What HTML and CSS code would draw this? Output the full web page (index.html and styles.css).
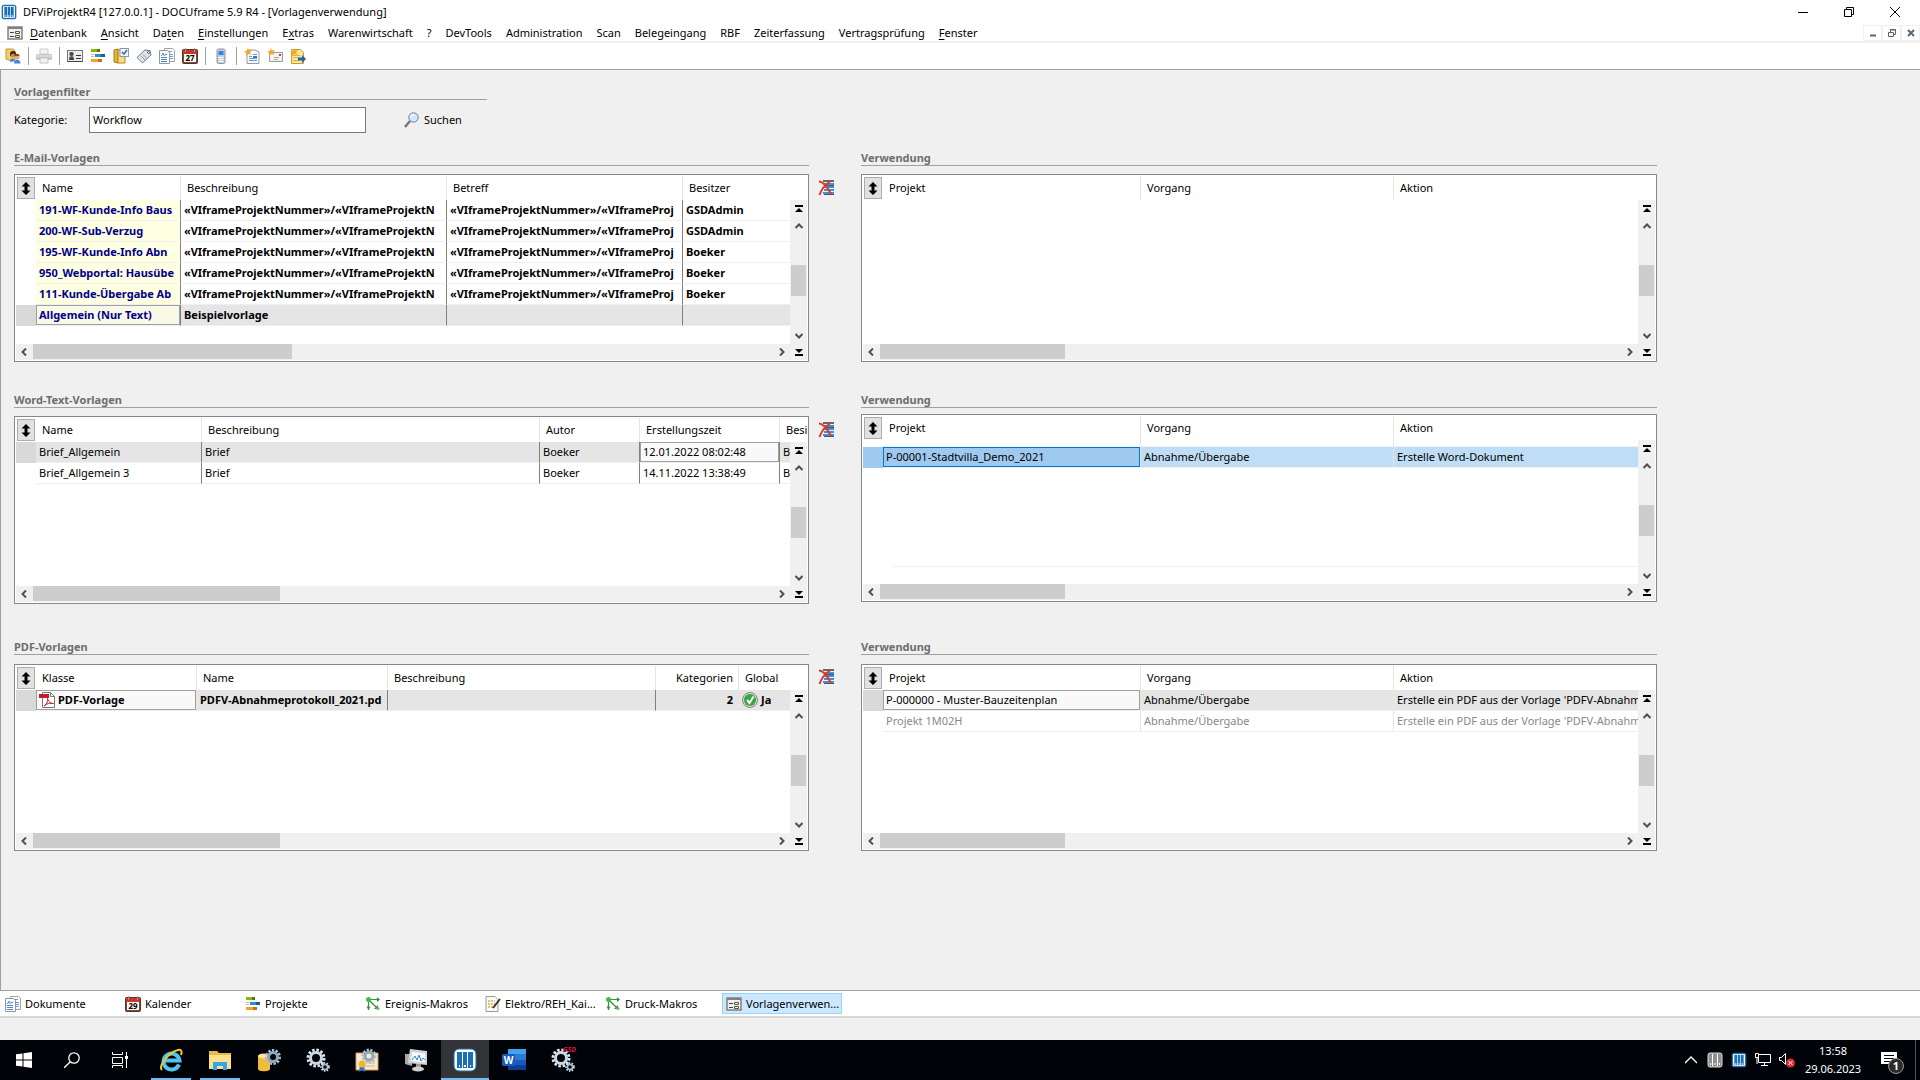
FILE: index.html
```html
<!DOCTYPE html>
<html lang="de">
<head>
    <meta charset="UTF-8">
    <meta name="viewport" content="width=device-width, initial-scale=1.0">
    <title>DOCUframe - Vorlagenverwendung</title>
    <link rel="stylesheet" href="styles.css">
</head>
<body>

    <!-- ICONS -->
    <svg class="sprite" aria-hidden="true">
        <symbol id="i-app" viewBox="0 0 24 24">
            <rect x="1" y="1" width="22" height="22" rx="4" fill="#1a6fb5"/>
            <rect x="3" y="3" width="18" height="18" rx="2" fill="#fff"/>
            <path d="M5 4h4v16H5zM10 4h4v16h-4zM15 4h4v16h-4z" fill="#1a6fb5"/>
            <path d="M6 17h2v2H6zM11 17h2v2h-2zM16 17h2v2h-2z" fill="#cfe6f8"/>
        </symbol>
        <symbol id="i-appgrey" viewBox="0 0 16 16">
            <rect x="1" y="1" width="14" height="14" rx="2" fill="#8f8f8f" stroke="#ddd"/>
            <path d="M5.500 2v12M10.500 2v12" stroke="#fff"/>
            <path d="M3 11h1v2H3zM7.500 11h1v2h-1zM12 11h1v2h-1z" fill="#fff"/>
        </symbol>
        <symbol id="i-form" viewBox="0 0 16 16">
            <rect x="1" y="2" width="14" height="12" fill="#eee" stroke="#808080" stroke-width="1.500"/>
            <path d="M1 2h14v2H1z" fill="#808080"/>
            <path d="M3 7.500h4M3 11.500h4" stroke="#444"/>
            <path d="M8.500 6.500h4v2h-4zM8.500 10.500h4v2h-4z" fill="#fffbb0" stroke="#555"/>
        </symbol>
        <symbol id="i-user" viewBox="0 0 16 16">
            <path d="M1 1h7l2 2v9H3l-2-1z" fill="#f1cf63" stroke="#c79a28"/>
            <circle cx="8" cy="6" r="3" fill="#3a2312"/>
            <circle cx="8" cy="7.500" r="2" fill="#c58a55"/>
            <circle cx="12" cy="9" r="2.500" fill="#e9a86c"/>
            <path d="M9.500 8c0-3 5-3 5 0z" fill="#7a4a20"/>
            <path d="M5 14c0-5 5-4 5-1zM9 15.500c0-5 6.500-5 6.500 0z" fill="#3f83dd"/>
        </symbol>
        <symbol id="i-print" viewBox="0 0 16 16">
            <path d="M4 1h8v5H4z" fill="#f4f4f4" stroke="#ccc"/>
            <rect x="0" y="6" width="16" height="6" rx="1.500" fill="#c9c9c9"/>
            <path d="M1 8h14" stroke="#e8e8e8"/>
            <path d="M4 10h8v5H4z" fill="#f2f2f2" stroke="#c4c4c4"/>
        </symbol>
        <symbol id="i-card" viewBox="0 0 16 16">
            <rect x=".5" y="2.500" width="15" height="11" fill="#ececec" stroke="#777"/>
            <path d="M.5 13.500h15" stroke="#444"/>
            <path d="M2 4h5v8H2z" fill="#c4c4c4"/>
            <circle cx="4.500" cy="6" r="2" fill="#444"/>
            <path d="M2 12c0-5 5-5 5 0z" fill="#444"/>
            <path d="M9 7.500h5M9 10.500h5" stroke="#333"/>
        </symbol>
        <symbol id="i-bars" viewBox="0 0 16 16">
            <path d="M1 1h9v3H1z" fill="#8cb80c"/><path d="M7 1h3v3H7z" fill="#557a00"/>
            <path d="M5 6h10v3H5z" fill="#2c8fcb"/><path d="M11 6h4v3h-4z" fill="#17618f"/>
            <path d="M1 6.500h3M1 8.500h3" stroke="#bbb"/>
            <path d="M1 11h11v3H1z" fill="#f0a432"/><path d="M8 11h4v3H8z" fill="#c96f14"/>
        </symbol>
        <symbol id="i-book" viewBox="0 0 16 16">
            <path d="M1 2l4-1v14l-4-1z" fill="#e2b637" stroke="#a57d17"/>
            <path d="M5 2h7v13H5z" fill="#f6dd83" stroke="#b58a1f"/>
            <rect x="7" y=".5" width="8.500" height="8" fill="#f3f7fc" stroke="#8899aa"/>
            <path d="M9 4l2 2 3-4" fill="none" stroke="#2b6dc4" stroke-width="1.500"/>
        </symbol>
        <symbol id="i-tag" viewBox="0 0 16 16">
            <path d="M9 2l5 .500L15 7l-8.500 8L1 9.500z" fill="#dfe5ea" stroke="#707a84"/>
            <circle cx="12.500" cy="4.500" r="1" fill="#fff" stroke="#555"/>
            <path d="M5 8l4 4M7 6.500l4 4" stroke="#8d99a5"/>
        </symbol>
        <symbol id="i-docs" viewBox="0 0 16 16">
            <path d="M5.500 .5h8l2 2v11h-10z" fill="#fff" stroke="#a2a2a2"/>
            <path d="M8 3.500h5M11 6.500h3M11 8.500h3M11 10.500h3" stroke="#6a9bd6"/>
            <path d="M.5 2.500h8l2 2v11H.5z" fill="#f9fbfd" stroke="#969696"/>
            <path d="M2.500 8l1.500-3 1.500 3M6 6.500h2M2 9.500h6M2 11.500h6M2 13.500h6" fill="none" stroke="#4e87cf"/>
        </symbol>
        <symbol id="i-newdoc" viewBox="0 0 16 16">
            <path d="M3 2h8l4 2v11.500H3z" fill="#f5f9fd" stroke="#9a9a9a"/>
            <path d="M5 8.500h3M5 10.500h8M5 12.500h8M9 6.500h4" stroke="#6a9bd6"/>
            <path d="M9 8h4v2H9z" fill="#3d7ac6"/>
            <path d="M4 0l1 2.500L8 2 6 4.500 7.500 7 4.500 6 2 8l.3-3L0 3.500 3 3z" fill="#f5a623"/>
        </symbol>
        <symbol id="i-newmail" viewBox="0 0 16 16">
            <path d="M2.500 4.500h13v9h-13z" fill="#f3f3f3" stroke="#9a9a9a"/>
            <path d="M12 6h2v2h-2z" fill="#d43b2f"/>
            <path d="M7 9.500h5M7 11.500h4" stroke="#aaa"/>
            <path d="M4 0l1 2.500L8 2 6 4.500 7.500 7 4.500 6 2 8l.3-3L0 3.500 3 3z" fill="#f5a623"/>
        </symbol>
        <symbol id="i-newnote" viewBox="0 0 16 16">
            <path d="M1.500 1.500h9l3 3v11h-12z" fill="#fbe795" stroke="#c8a02e"/>
            <path d="M3 7.500h7M3 9.500h6M3 12.500h7" stroke="#d7b54a"/>
            <path d="M8 9.500h4V7l4 4-4 4v-2.500H8z" fill="#2a5fb8"/>
            <path d="M4 0l1 2.500L8 2 6 4.500 7.500 7 4.500 6 2 8l.3-3L0 3.500 3 3z" fill="#f5a623"/>
        </symbol>
        <symbol id="i-cal" viewBox="0 0 16 16">
            <rect x=".5" y="1.500" width="15" height="14" rx="1" fill="#7b4a33" stroke="#5a3222"/>
            <path d="M1 2h14v4H1z" fill="#c8362c"/>
            <path d="M3.500 0v4M12.500 0v4" stroke="#999"/>
            <path d="M2 6h12v8H2z" fill="#fdfaf4"/>
        </symbol>
        <symbol id="i-phone" viewBox="0 0 16 16">
            <rect x="4" y="1" width="8" height="14.500" rx="1.500" fill="#c5ced8" stroke="#8b96a3"/>
            <path d="M5.500 3h5v4h-5z" fill="#3386dc"/>
            <path d="M5.500 9.500h5M5.500 11.500h5M5.500 13.500h5" stroke="#fff"/>
        </symbol>
        <symbol id="i-search" viewBox="0 0 16 16">
            <path d="M1 15l5-6" stroke="#777" stroke-width="2.500"/>
            <circle cx="9.500" cy="5.500" r="4.700" fill="#cfe6fb" stroke="#6c7c8c"/>
            <path d="M7 5c.5-2 2-2.500 3-2.500" fill="none" stroke="#fff" stroke-width="1.500"/>
        </symbol>
        <symbol id="i-del" viewBox="0 0 16 16">
            <path d="M5 1h11" stroke="#666" stroke-width="2"/>
            <path d="M6 4h10M6 7h10M6 10h10M5 13h11" stroke="#3e8fdd" stroke-width="2"/>
            <path d="M6 5.500h10M6 14.500h10" stroke="#555"/>
            <path d="M1 1.500c4 0 8 5 12 12.500M12 1.500C8 4 4 8 1.500 15" fill="none" stroke="#df3a25" stroke-width="2"/>
        </symbol>
        <symbol id="i-pdf" viewBox="0 0 16 16">
            <path d="M3.500 .5h8l4 4v11h-12z" fill="#fff" stroke="#777"/>
            <path d="M11.500 .5v4h4" fill="none" stroke="#777"/>
            <path d="M0 2h10v4H0z" fill="#c11e2b"/>
            <path d="M5 14c3-2 4-5 3.500-7.500C10 10 12 12 14.500 11.500 11 10.500 8 11.500 5 14z" fill="none" stroke="#b5202b"/>
        </symbol>
        <symbol id="i-ok" viewBox="0 0 16 16">
            <circle cx="8" cy="8" r="7.500" fill="#d5d5d5" stroke="#888"/>
            <circle cx="8" cy="8" r="6" fill="#35a83a"/>
            <path d="M5 8l2.500 3L11.500 4.500" fill="none" stroke="#fff" stroke-width="2"/>
        </symbol>
        <symbol id="i-macro" viewBox="0 0 16 16">
            <path d="M3.500 14V4M3 3.500h11M4 4l8 8" fill="none" stroke="#3a8a43" stroke-width="1.200"/>
            <path d="M9 13h4V9z" fill="#3a8a43"/>
            <circle cx="3.500" cy="3.500" r="2.500" fill="#37c340"/>
            <path d="M1.500 10.500h4L3.500 14zM12 1l3 2.500L12 6z" fill="#3a8a43"/>
            <circle cx="13" cy="12.500" r="1.500" fill="#6fba74"/>
        </symbol>
        <symbol id="i-note" viewBox="0 0 16 16">
            <path d="M1 .5h9l3 3v12H1z" fill="#fbfbf5" stroke="#999"/>
            <path d="M3 5h7M3 8h7M3 11h5" stroke="#d9b437" stroke-width="1.500" stroke-dasharray="2 1"/>
            <path d="M8 12l7-9" stroke="#333" stroke-width="2"/>
        </symbol>
        <symbol id="i-updown" viewBox="0 0 10 13">
            <path d="M5 0l4.500 4.500H6.500v4h3L5 13 .5 8.500h3v-4h-3z"/>
        </symbol>
        <symbol id="i-top" viewBox="0 0 8 8"><path d="M0 0h8v2H0zM4 3l4 4H0z"/></symbol>
        <symbol id="i-bottom" viewBox="0 0 8 8"><path d="M0 6h8v2H0zM0 1h8L4 5z"/></symbol>
        <symbol id="i-chev" viewBox="0 0 8 8"><path d="M0.500 6L4 2.500 7.500 6" fill="none" stroke="#505050" stroke-width="2"/></symbol>
        <symbol id="i-gear" viewBox="0 0 24 24">
            <circle cx="10" cy="10" r="8" fill="none" stroke="#dce8f2" stroke-width="3" stroke-dasharray="2.500 1.700"/>
            <circle cx="10" cy="10" r="5.500" fill="none" stroke="#c8d8e6" stroke-width="3"/>
            <circle cx="19" cy="19" r="3.800" fill="none" stroke="#dce8f2" stroke-width="2" stroke-dasharray="1.500 1.200"/>
            <circle cx="19" cy="19" r="2.500" fill="none" stroke="#a9c3dc" stroke-width="1.500"/>
        </symbol>
    </svg>

    <!-- TITLE BAR -->
    <header class="titlebar">
        <svg class="icon"><use href="#i-app"/></svg>
        <h1>DFViProjektR4 [127.0.0.1] - DOCUframe 5.9 R4 - [Vorlagenverwendung]</h1>
        <div class="window-buttons">
            <button aria-label="Minimieren"><svg width="10" height="10"><path d="M0 5.500h10" stroke="#000"/></svg></button>
            <button aria-label="Wiederherstellen"><svg width="10" height="10" fill="none" stroke="#000"><path d="M.5 2.500h7v7h-7zM2.500 2.500v-2h7v7h-2"/></svg></button>
            <button aria-label="Schließen"><svg width="10" height="10"><path d="M0 0l10 10M10 0L0 10" stroke="#000"/></svg></button>
        </div>
    </header>

    <!-- MENU -->
    <nav class="menubar">
        <svg class="icon"><use href="#i-form"/></svg>
        <a href="#"><u>D</u>atenbank</a>
        <a href="#"><u>A</u>nsicht</a>
        <a href="#">Da<u>t</u>en</a>
        <a href="#"><u>E</u>instellungen</a>
        <a href="#">E<u>x</u>tras</a>
        <a href="#">Warenwirtschaft</a>
        <a href="#">?</a>
        <a href="#">DevTools</a>
        <a href="#">Administration</a>
        <a href="#">Scan</a>
        <a href="#">Belegeingang</a>
        <a href="#">RBF</a>
        <a href="#">Zeiterfassung</a>
        <a href="#">Vertragsprüfung</a>
        <a href="#"><u>F</u>enster</a>
        <div class="child-buttons">
            <button aria-label="Fenster minimieren"><svg width="8" height="8"><path d="M1 6.500h6" stroke="#567" stroke-width="2"/></svg></button>
            <button aria-label="Fenster wiederherstellen"><svg width="8" height="8" fill="none" stroke="#567"><path d="M.5 3.500h5v4h-5zM2.500 3V.5h5v5H6M2 1h6"/></svg></button>
            <button aria-label="Fenster schließen"><svg width="8" height="8"><path d="M1 1l6 6M7 1L1 7" stroke="#567" stroke-width="2"/></svg></button>
        </div>
    </nav>

    <!-- TOOLBAR -->
    <div class="toolbar">
        <button aria-label="Benutzer"><svg class="icon"><use href="#i-user"/></svg></button>
        <span class="sep"></span>
        <button aria-label="Drucken"><svg class="icon"><use href="#i-print"/></svg></button>
        <span class="sep"></span>
        <button aria-label="Adressen"><svg class="icon"><use href="#i-card"/></svg></button>
        <button aria-label="Projekte"><svg class="icon"><use href="#i-bars"/></svg></button>
        <button aria-label="Aufgaben"><svg class="icon"><use href="#i-book"/></svg></button>
        <button aria-label="Etiketten"><svg class="icon"><use href="#i-tag"/></svg></button>
        <button aria-label="Dokumente"><svg class="icon"><use href="#i-docs"/></svg></button>
        <button class="cal" aria-label="Kalender"><svg class="icon"><use href="#i-cal"/></svg><span>27</span></button>
        <span class="sep"></span>
        <button aria-label="Telefon"><svg class="icon"><use href="#i-phone"/></svg></button>
        <span class="sep"></span>
        <button aria-label="Neues Dokument"><svg class="icon"><use href="#i-newdoc"/></svg></button>
        <button aria-label="Neue E-Mail"><svg class="icon"><use href="#i-newmail"/></svg></button>
        <button aria-label="Neue Notiz"><svg class="icon"><use href="#i-newnote"/></svg></button>
    </div>

    <!-- CONTENT -->
    <main class="content">
        <form class="filter">
            <h2>Vorlagenfilter</h2>
            <div class="filter-row">
                <label for="kategorie">Kategorie:</label>
                <input type="text" id="kategorie" value="Workflow">
                <button type="button"><svg class="icon"><use href="#i-search"/></svg>Suchen</button>
            </div>
        </form>

        <!-- E-Mail -->
        <div class="pair">
            <section>
                <h2>E-Mail-Vorlagen</h2>
                <div class="list">
                    <table class="grid dark bold">
                        <colgroup><col class="w-head"><col class="w-145"><col class="w-266"><col class="w-236"><col><col class="w-scroll"></colgroup>
                        <thead>
                            <tr><th><button class="sort" aria-label="Sortierung"><svg width="10" height="13"><use href="#i-updown"/></svg></button></th><th>Name</th><th>Beschreibung</th><th>Betreff</th><th colspan="2">Besitzer</th></tr>
                        </thead>
                        <tbody>
                            <tr><td></td><td class="key"><span>191-WF-Kunde-Info Baus</span></td><td><span>«VIframeProjektNummer»/«VIframeProjektN</span></td><td><span>«VIframeProjektNummer»/«VIframeProj</span></td><td>GSDAdmin</td><td></td></tr>
                            <tr><td></td><td class="key"><span>200-WF-Sub-Verzug</span></td><td><span>«VIframeProjektNummer»/«VIframeProjektN</span></td><td><span>«VIframeProjektNummer»/«VIframeProj</span></td><td>GSDAdmin</td><td></td></tr>
                            <tr><td></td><td class="key"><span>195-WF-Kunde-Info Abn</span></td><td><span>«VIframeProjektNummer»/«VIframeProjektN</span></td><td><span>«VIframeProjektNummer»/«VIframeProj</span></td><td>Boeker</td><td></td></tr>
                            <tr><td></td><td class="key"><span>950_Webportal: Hausübe</span></td><td><span>«VIframeProjektNummer»/«VIframeProjektN</span></td><td><span>«VIframeProjektNummer»/«VIframeProj</span></td><td>Boeker</td><td></td></tr>
                            <tr><td></td><td class="key"><span>111-Kunde-Übergabe Ab</span></td><td><span>«VIframeProjektNummer»/«VIframeProjektN</span></td><td><span>«VIframeProjektNummer»/«VIframeProj</span></td><td>Boeker</td><td></td></tr>
                            <tr class="current"><td></td><td class="key focus">Allgemein (Nur Text)</td><td>Beispielvorlage</td><td></td><td></td><td></td></tr>
                        </tbody>
                    </table>
                    <div class="vscroll">
                        <button aria-label="Anfang"><svg width="8" height="8"><use href="#i-top"/></svg></button>
                        <button aria-label="Hoch"><svg width="8" height="8"><use href="#i-chev"/></svg></button>
                        <div class="thumb"></div>
                        <button class="down" aria-label="Runter"><svg width="8" height="8"><use href="#i-chev"/></svg></button>
                    </div>
                    <div class="hscroll">
                        <button class="left" aria-label="Links"><svg width="8" height="8"><use href="#i-chev"/></svg></button>
                        <div class="thumb long"></div>
                        <button class="right" aria-label="Rechts"><svg width="8" height="8"><use href="#i-chev"/></svg></button>
                    </div>
                    <button class="end" aria-label="Ende"><svg width="8" height="8"><use href="#i-bottom"/></svg></button>
                </div>
            </section>
            <button class="delete" aria-label="Eintrag löschen"><svg class="icon"><use href="#i-del"/></svg></button>
            <section>
                <h2>Verwendung</h2>
                <div class="list">
                    <table class="grid">
                        <colgroup><col class="w-head"><col class="w-258"><col class="w-253"><col><col class="w-scroll"></colgroup>
                        <thead>
                            <tr><th><button class="sort" aria-label="Sortierung"><svg width="10" height="13"><use href="#i-updown"/></svg></button></th><th>Projekt</th><th>Vorgang</th><th colspan="2">Aktion</th></tr>
                        </thead>
                    </table>
                    <div class="vscroll">
                        <button aria-label="Anfang"><svg width="8" height="8"><use href="#i-top"/></svg></button>
                        <button aria-label="Hoch"><svg width="8" height="8"><use href="#i-chev"/></svg></button>
                        <div class="thumb"></div>
                        <button class="down" aria-label="Runter"><svg width="8" height="8"><use href="#i-chev"/></svg></button>
                    </div>
                    <div class="hscroll">
                        <button class="left" aria-label="Links"><svg width="8" height="8"><use href="#i-chev"/></svg></button>
                        <div class="thumb short"></div>
                        <button class="right" aria-label="Rechts"><svg width="8" height="8"><use href="#i-chev"/></svg></button>
                    </div>
                    <button class="end" aria-label="Ende"><svg width="8" height="8"><use href="#i-bottom"/></svg></button>
                </div>
            </section>
        </div>

        <!-- Word -->
        <div class="pair">
            <section>
                <h2>Word-Text-Vorlagen</h2>
                <div class="list">
                    <table class="grid dark">
                        <colgroup><col class="w-head"><col class="w-166"><col class="w-338"><col class="w-100"><col class="w-140"><col><col class="w-scroll"></colgroup>
                        <thead>
                            <tr><th><button class="sort" aria-label="Sortierung"><svg width="10" height="13"><use href="#i-updown"/></svg></button></th><th>Name</th><th>Beschreibung</th><th>Autor</th><th>Erstellungszeit</th><th colspan="2">Besi</th></tr>
                        </thead>
                        <tbody>
                            <tr class="current"><td></td><td>Brief_Allgemein</td><td>Brief</td><td>Boeker</td><td class="focus">12.01.2022 08:02:48</td><td>B</td><td></td></tr>
                            <tr><td></td><td>Brief_Allgemein 3</td><td>Brief</td><td>Boeker</td><td>14.11.2022 13:38:49</td><td>B</td><td></td></tr>
                        </tbody>
                    </table>
                    <div class="vscroll">
                        <button aria-label="Anfang"><svg width="8" height="8"><use href="#i-top"/></svg></button>
                        <button aria-label="Hoch"><svg width="8" height="8"><use href="#i-chev"/></svg></button>
                        <div class="thumb"></div>
                        <button class="down" aria-label="Runter"><svg width="8" height="8"><use href="#i-chev"/></svg></button>
                    </div>
                    <div class="hscroll">
                        <button class="left" aria-label="Links"><svg width="8" height="8"><use href="#i-chev"/></svg></button>
                        <div class="thumb"></div>
                        <button class="right" aria-label="Rechts"><svg width="8" height="8"><use href="#i-chev"/></svg></button>
                    </div>
                    <button class="end" aria-label="Ende"><svg width="8" height="8"><use href="#i-bottom"/></svg></button>
                </div>
            </section>
            <button class="delete" aria-label="Eintrag löschen"><svg class="icon"><use href="#i-del"/></svg></button>
            <section class="raised">
                <h2>Verwendung</h2>
                <div class="list">
                    <table class="grid">
                        <colgroup><col class="w-head"><col class="w-258"><col class="w-253"><col><col class="w-scroll"></colgroup>
                        <thead>
                            <tr><th><button class="sort" aria-label="Sortierung"><svg width="10" height="13"><use href="#i-updown"/></svg></button></th><th>Projekt</th><th>Vorgang</th><th colspan="2">Aktion</th></tr>
                        </thead>
                        <tbody>
                            <tr class="gap"><td></td><td></td><td></td><td></td><td></td></tr>
                            <tr class="selected"><td></td><td class="focus">P-00001-Stadtvilla_Demo_2021</td><td>Abnahme/Übergabe</td><td>Erstelle Word-Dokument</td><td></td></tr>
                        </tbody>
                    </table>
                    <div class="vscroll">
                        <button aria-label="Anfang"><svg width="8" height="8"><use href="#i-top"/></svg></button>
                        <button aria-label="Hoch"><svg width="8" height="8"><use href="#i-chev"/></svg></button>
                        <div class="thumb"></div>
                        <button class="down" aria-label="Runter"><svg width="8" height="8"><use href="#i-chev"/></svg></button>
                    </div>
                    <div class="rule"></div>
                    <div class="hscroll">
                        <button class="left" aria-label="Links"><svg width="8" height="8"><use href="#i-chev"/></svg></button>
                        <div class="thumb short"></div>
                        <button class="right" aria-label="Rechts"><svg width="8" height="8"><use href="#i-chev"/></svg></button>
                    </div>
                    <button class="end" aria-label="Ende"><svg width="8" height="8"><use href="#i-bottom"/></svg></button>
                </div>
            </section>
        </div>

        <!-- PDF -->
        <div class="pair">
            <section>
                <h2>PDF-Vorlagen</h2>
                <div class="list low">
                    <table class="grid bold">
                        <colgroup><col class="w-head"><col class="w-161"><col class="w-191"><col class="w-268"><col class="w-83"><col><col class="w-scroll"></colgroup>
                        <thead>
                            <tr><th><button class="sort" aria-label="Sortierung"><svg width="10" height="13"><use href="#i-updown"/></svg></button></th><th>Klasse</th><th>Name</th><th>Beschreibung</th><th class="num">Kategorien</th><th colspan="2">Global</th></tr>
                        </thead>
                        <tbody>
                            <tr class="current"><td></td><td class="focus"><svg class="icon"><use href="#i-pdf"/></svg>PDF-Vorlage</td><td class="line"><span>PDFV-Abnahmeprotokoll_2021.pd</span></td><td class="line"></td><td class="num">2</td><td><svg class="icon"><use href="#i-ok"/></svg>Ja</td><td></td></tr>
                        </tbody>
                    </table>
                    <div class="vscroll">
                        <button aria-label="Anfang"><svg width="8" height="8"><use href="#i-top"/></svg></button>
                        <button aria-label="Hoch"><svg width="8" height="8"><use href="#i-chev"/></svg></button>
                        <div class="thumb"></div>
                        <button class="down" aria-label="Runter"><svg width="8" height="8"><use href="#i-chev"/></svg></button>
                    </div>
                    <div class="hscroll">
                        <button class="left" aria-label="Links"><svg width="8" height="8"><use href="#i-chev"/></svg></button>
                        <div class="thumb"></div>
                        <button class="right" aria-label="Rechts"><svg width="8" height="8"><use href="#i-chev"/></svg></button>
                    </div>
                    <button class="end" aria-label="Ende"><svg width="8" height="8"><use href="#i-bottom"/></svg></button>
                </div>
            </section>
            <button class="delete" aria-label="Eintrag löschen"><svg class="icon"><use href="#i-del"/></svg></button>
            <section>
                <h2>Verwendung</h2>
                <div class="list low">
                    <table class="grid">
                        <colgroup><col class="w-head"><col class="w-258"><col class="w-253"><col><col class="w-scroll"></colgroup>
                        <thead>
                            <tr><th><button class="sort" aria-label="Sortierung"><svg width="10" height="13"><use href="#i-updown"/></svg></button></th><th>Projekt</th><th>Vorgang</th><th colspan="2">Aktion</th></tr>
                        </thead>
                        <tbody>
                            <tr class="current"><td></td><td class="focus">P-000000 - Muster-Bauzeitenplan</td><td>Abnahme/Übergabe</td><td>Erstelle ein PDF aus der Vorlage 'PDFV-Abnahm</td><td></td></tr>
                            <tr class="off"><td></td><td>Projekt 1M02H</td><td>Abnahme/Übergabe</td><td>Erstelle ein PDF aus der Vorlage 'PDFV-Abnahm</td><td></td></tr>
                        </tbody>
                    </table>
                    <div class="vscroll">
                        <button aria-label="Anfang"><svg width="8" height="8"><use href="#i-top"/></svg></button>
                        <button aria-label="Hoch"><svg width="8" height="8"><use href="#i-chev"/></svg></button>
                        <div class="thumb"></div>
                        <button class="down" aria-label="Runter"><svg width="8" height="8"><use href="#i-chev"/></svg></button>
                    </div>
                    <div class="hscroll">
                        <button class="left" aria-label="Links"><svg width="8" height="8"><use href="#i-chev"/></svg></button>
                        <div class="thumb short"></div>
                        <button class="right" aria-label="Rechts"><svg width="8" height="8"><use href="#i-chev"/></svg></button>
                    </div>
                    <button class="end" aria-label="Ende"><svg width="8" height="8"><use href="#i-bottom"/></svg></button>
                </div>
            </section>
        </div>
    </main>

    <!-- WINDOW TABS -->
    <nav class="tabs">
        <a href="#"><svg class="icon"><use href="#i-docs"/></svg>Dokumente</a>
        <a href="#"><span class="cal"><svg class="icon"><use href="#i-cal"/></svg><span>29</span></span>Kalender</a>
        <a href="#"><svg class="icon"><use href="#i-bars"/></svg>Projekte</a>
        <a href="#"><svg class="icon"><use href="#i-macro"/></svg>Ereignis-Makros</a>
        <a href="#"><svg class="icon"><use href="#i-note"/></svg>Elektro/REH_Kai...</a>
        <a href="#"><svg class="icon"><use href="#i-macro"/></svg>Druck-Makros</a>
        <a href="#" class="active"><svg class="icon"><use href="#i-form"/></svg>Vorlagenverwen...</a>
    </nav>
    <div class="statusbar"></div>

    <!-- TASKBAR -->
    <footer class="taskbar">
        <button aria-label="Start"><svg width="16" height="16"><path d="M0 2.300L6.500 1.400v6.100H0zM7.500 1.200L16 0v7.500H7.500zM0 8.500h6.500v6.100L0 13.700zM7.500 8.500H16V16l-8.500-1.200z" fill="#fff"/></svg></button>
        <button aria-label="Suche"><svg width="16" height="16" fill="none" stroke="#fff" stroke-width="1.300"><circle cx="10" cy="6" r="5.200"/><path d="M6.300 9.700L0 16"/></svg></button>
        <button aria-label="Taskansicht"><svg width="16" height="16" fill="none" stroke="#fff"><path d="M.5 0v2.500h10V0M.5 5.500h10v6H.5zM.5 16v-2.500h10V16M14.500 0v16"/><path d="M13 4h3v3h-3z" fill="#fff" stroke="none"/></svg></button>
        <div class="apps">
            <button class="open" aria-label="Internet Explorer"><svg width="24" height="24" viewBox="0 0 24 24">
                <path d="M20 16.500A8 8 0 1 1 20.500 12.500H6" fill="none" stroke="#52c3f1" stroke-width="4"/>
                <path d="M3 22C-1 18 10 4 19 2c4-1 4 2 3 5" fill="none" stroke="#f5c926" stroke-width="2"/></svg></button>
            <button class="open" aria-label="Explorer"><svg width="24" height="24" viewBox="0 0 24 24">
                <path d="M1 3h8l2 2h12v16H1z" fill="#e9b94a"/><path d="M1 7h22v14H1z" fill="#fde08b"/>
                <path d="M5 22v-8h14v8h-4v-4H9v4z" fill="#35a6e6"/></svg></button>
            <button aria-label="Datenbankdienst"><svg width="24" height="24" viewBox="0 0 24 24">
                <path d="M1 8v13c0 3 12 3 12 0V8z" fill="#f0bb3c"/><ellipse cx="7" cy="8" rx="6" ry="2.500" fill="#fce29a"/>
                <circle cx="16" cy="9" r="6.500" fill="none" stroke="#aebfce" stroke-width="3" stroke-dasharray="2.200 1.400"/>
                <circle cx="16" cy="9" r="4.500" fill="none" stroke="#93a8ba" stroke-width="3"/></svg></button>
            <button aria-label="Dienste"><svg width="24" height="24"><use href="#i-gear"/></svg></button>
            <button aria-label="Lizenzen"><svg width="24" height="24" viewBox="0 0 24 24">
                <path d="M1 5h22v17H1z" fill="#f7ead2" stroke="#d9955a"/><path d="M4 18h16M12 15h8" stroke="#c9b08a"/>
                <circle cx="14" cy="8" r="6" fill="none" stroke="#aebfce" stroke-width="3" stroke-dasharray="2.200 1.400"/>
                <circle cx="14" cy="8" r="4" fill="none" stroke="#93a8ba" stroke-width="3"/>
                <path d="M5 17l-1 7 3-2 3 2-1-7z" fill="#2d6fd0"/><circle cx="7" cy="16" r="3.500" fill="#f0b52c"/></svg></button>
            <button aria-label="Monitor"><svg width="24" height="24" viewBox="0 0 24 24">
                <path d="M1 6h7v12l-7-2z" fill="#a9a9a9"/><path d="M6 1l17 2v14L4 15z" fill="#d3d3d3"/>
                <path d="M8 4l13 1.500v9L7 13z" fill="#f6fafd"/>
                <path d="M8 12l3-4 2 4 2-5 2 6 2-3 2 2" fill="none" stroke="#2f86cc"/>
                <path d="M12 16h5v4h-5z" fill="#999"/><ellipse cx="14" cy="21" rx="6" ry="2.500" fill="#d0d0d0"/></svg></button>
            <button class="open current" aria-label="DOCUframe"><svg width="24" height="24" viewBox="0 0 24 24">
                <rect x="1" y="1" width="22" height="22" rx="5" fill="#fff" stroke="#1a6fb5"/>
                <path d="M4 4h5v16H4zM10 4h4v16h-4zM15 4h5v16h-5z" fill="#1a6fb5"/>
                <path d="M6 17h1v2H6zM11 17h2v2h-2zM17 17h1v2h-1z" fill="#fff"/></svg></button>
            <button class="word" aria-label="Word"><svg width="24" height="24" viewBox="0 0 24 24">
                <path d="M6 1h18v6H6z" fill="#41a5ee"/><path d="M6 6h18v6H6z" fill="#2b7cd3"/>
                <path d="M6 12h18v5H6z" fill="#185abd"/><path d="M6 17h18v5H6z" fill="#103f91"/>
                <rect y="6" width="13" height="12" rx="1" fill="#185abd"/></svg><span>W</span></button>
            <button class="gsd" aria-label="GSD Dienste"><svg width="24" height="24"><use href="#i-gear"/></svg><span>GSD</span></button>
        </div>
        <div class="tray">
            <button aria-label="Ausgeblendete Symbole"><svg width="12" height="8"><path d="M0 7l6-6 6 6" fill="none" stroke="#fff" stroke-width="1.300"/></svg></button>
            <button aria-label="DOCUframe Server"><svg class="icon"><use href="#i-appgrey"/></svg></button>
            <button aria-label="DOCUframe Client"><svg class="icon"><use href="#i-app"/></svg></button>
            <button aria-label="Netzwerk"><svg width="16" height="16" fill="none" stroke="#fff"><path d="M3.500 2.500h12v8h-12zM9.500 10.500v3M6 13.500h7"/><path d="M.5 1.500h3v4h-3zM2 6v6" fill="#000307"/></svg></button>
            <button aria-label="Lautsprecher"><svg width="16" height="16" fill="none" stroke="#fff"><path d="M.5 5.500h2l4-4v11l-4-4h-2z"/><circle cx="11.500" cy="11" r="4.500" fill="#e02b2b" stroke="none"/><path d="M9.500 9l4 4M13.500 9l-4 4"/></svg></button>
        </div>
        <div class="clock"><time>13:58</time><time>29.06.2023</time></div>
        <button class="notify" aria-label="Benachrichtigungen"><svg width="16" height="16"><path d="M0 0h16v12h-4v4l-4-4H0z" fill="#fff"/><path d="M3 3.500h10M3 6.500h10M3 9.500h6" stroke="#000307"/></svg><span>1</span></button>
        <button class="desktop" aria-label="Desktop anzeigen"></button>
    </footer>

</body>
</html>
```
FILE: styles.css
```css
* { margin: 0; padding: 0; box-sizing: border-box; }

body {
    display: flex; flex-direction: column; min-height: 100vh;
    background: #f0f0f0; color: #000;
    font-family: "Noto Sans", "Open Sans", sans-serif; font-size: 11px; line-height: 16px;
}

button, input { font: inherit; color: inherit; }
button { background: none; border: 0; display: flex; align-items: center; justify-content: center; }
a { color: inherit; text-decoration: none; }
svg { display: block; flex: none; }
h1 { font-size: 11px; font-weight: normal; }
h2 {
    font-size: 11px; font-weight: 700; line-height: 15px; color: #6d6d6d;
    border-bottom: 1px solid #a0a0a0; margin-bottom: 8px;
}

.sprite { position: absolute; width: 0; height: 0; }
.icon { width: 16px; height: 16px; }

/* TITLE BAR */
.titlebar { display: flex; align-items: center; height: 24px; background: #fff; padding: 0 2px 0 1px; gap: 6px; }
.window-buttons { display: flex; margin-left: auto; }
.window-buttons button { width: 46px; height: 22px; }

/* MENU */
.menubar {
    display: flex; align-items: center; gap: 14px; height: 19px;
    background: #fff; border-bottom: 2px solid #f0f0f0; padding-left: 7px;
}
.menubar .icon { margin-right: -7px; }
.menubar a { white-space: nowrap; }
.menubar u { text-underline-offset: 2px; }
.child-buttons { display: flex; margin-left: auto; }
.child-buttons button { width: 19px; height: 16px; border: 1px solid #f0f0f0; }

/* TOOLBAR */
.toolbar {
    display: flex; align-items: center; gap: 7px; height: 27px;
    background: #fff; border-bottom: 1px solid #a0a0a0; padding-left: 5px;
}
.sep { width: 1px; height: 18px; background: #a0a0a0; }
.cal { position: relative; }
.cal span {
    position: absolute; left: 0; right: 0; top: 6px; text-align: center;
    font-size: 8px; line-height: 8px; font-weight: bold; color: #000;
}

/* CONTENT */
.content { flex: 1; padding: 14px 13px; border-left: 1px solid #a0a0a0; border-bottom: 1px solid #a0a0a0; }
.filter h2 { max-width: 473px; margin-bottom: 7px; }
.filter-row { display: flex; align-items: center; margin-bottom: 17px; }
.filter-row label { width: 75px; }
.filter-row input { width: 277px; height: 26px; border: 1px solid #7a7a7a; background: #fff; padding: 0 3px 2px; }
.filter-row button { gap: 4px; margin-left: 38px; }

.pair {
    display: grid; align-items: start;
    grid-template-columns: minmax(0, 795px) 52px minmax(0, 796px);
    margin-bottom: 30px;
}
.pair:last-child { margin-top: 35px; }
.pair:last-child h2 { margin-bottom: 9px; }
.pair + .pair { margin-bottom: 0; }
.raised h2 { margin-bottom: 6px; }
.delete { margin: 30px 0 0 9px; justify-self: start; }

/* LIST */
.list {
    display: grid; grid-template-columns: 1fr 17px; grid-template-rows: 168px 16px;
    background: #fff; border: 1px solid #828790; padding: 1px;
}
.list.low { grid-template-rows: 167px 16px; }

.grid { grid-area: 1 / 1 / 2 / 3; width: 100%; align-self: start; table-layout: fixed; border-spacing: 0; }
.grid th {
    height: 24px; font-weight: normal; text-align: left; padding-left: 6px;
    border-right: 1px solid #e5e5e5; white-space: nowrap; overflow: hidden;
}
.grid th:first-child { padding-left: 1px; border-right: 0; }
.grid th:last-child { border-right: 0; }
.grid td {
    height: 21px; line-height: 16px; padding: 0 4px 0 3px; white-space: nowrap; overflow: hidden;
    border-right: 1px solid #e5e5e5; border-bottom: 1px solid #f0f0f0;
}
.grid td:first-child, .grid td:last-child { border-color: transparent; border-right: 0; }
.grid td:nth-last-child(2) { border-right: 0; padding-right: 0; }
.grid td span { display: block; overflow: hidden; }
.grid td .icon { display: inline-block; vertical-align: top; margin-right: 3px; }
.dark td { border-right-color: #808080; }
.grid td.line { border-right-color: #808080; }
.bold td { font-weight: 700; }
.grid .num { text-align: right; padding-right: 5px; }
.grid td.key { background: #ffffe1; color: #00008b; }

.current td { background: #e5e5e5; }
.current td:first-child { background: #d9d9d9; }
.current td:last-child { background: none; }
.grid td.focus { background: #f9f9f9; box-shadow: inset 0 0 0 1px #a0a0a0; }
.grid td.key.focus { background: #f9f9e8; }
.selected td { background: #bfddf5; }
.selected td:first-child { background: #9fcaef; }
.selected td:last-child { background: none; }
.grid .selected td.focus { background: #9fcaef; box-shadow: inset 0 0 0 1px #0078d7; }
.grid .gap td { height: 7px; }
.off td { color: #838990; }

.sort { width: 18px; height: 22px; background: #e1e1e1; border: 1px solid #adadad; padding-right: 1px; }

.w-head { width: 20px; }
.w-scroll { width: 17px; }
.w-83 { width: 83px; }
.w-100 { width: 100px; }
.w-140 { width: 140px; }
.w-145 { width: 145px; }
.w-161 { width: 161px; }
.w-166 { width: 166px; }
.w-191 { width: 191px; }
.w-236 { width: 236px; }
.w-253 { width: 253px; }
.w-258 { width: 258px; }
.w-266 { width: 266px; }
.w-268 { width: 268px; }
.w-338 { width: 338px; }

/* SCROLLBARS */
.vscroll {
    grid-area: 1 / 2; margin-top: 24px; background: #f0f0f0;
    display: flex; flex-direction: column; align-items: center;
}
.vscroll button { width: 16px; height: 17px; }
.vscroll .thumb { width: 15px; height: 31px; margin: auto 0; background: #cdcdcd; }
.hscroll { grid-area: 2 / 1; display: flex; background: #f0f0f0; }
.hscroll button { width: 17px; height: 16px; }
.hscroll .thumb { width: 247px; height: 15px; background: #cdcdcd; }
.hscroll .long { width: 259px; }
.hscroll .short { width: 185px; }
.hscroll .left { padding-right: 1px; }
.end { grid-area: 2 / 2; background: #f0f0f0; }
.down svg { transform: rotate(180deg); }
.left svg { transform: rotate(-90deg); }
.right { margin-left: auto; }
.right svg { transform: rotate(90deg); }
.rule { grid-area: 1 / 1; align-self: end; height: 1px; margin: 0 0 17px 30px; background: #f0f0f0; }

/* WINDOW TABS */
.tabs { display: flex; height: 25px; padding: 2px; background: #fff; }
.tabs a { display: flex; align-items: center; gap: 4px; width: 120px; height: 21px; padding-left: 3px; white-space: nowrap; }
.tabs .active { background: #cce8ff; border: 1px solid #99d1ff; }
.statusbar { height: 24px; border-top: 2px solid #d9d9d9; }

/* TASKBAR */
.taskbar { display: flex; height: 40px; background: #000307; color: #fff; }
.taskbar button { width: 48px; height: 40px; }
.apps { display: flex; gap: 1px; margin-left: 3px; }
.taskbar .open { background: linear-gradient(#76b9ed, #76b9ed) bottom / 40px 2px no-repeat; }
.taskbar .current { background: linear-gradient(#76b9ed, #76b9ed) bottom / 48px 2px no-repeat #333438; }
.word, .gsd { position: relative; }
.word span { position: absolute; left: 12px; top: 12px; width: 13px; font-size: 10px; font-weight: bold; }
.gsd span { position: absolute; right: 11px; top: 6px; font-size: 7px; line-height: 8px; font-weight: bold; font-style: italic; color: #d5163c; }
.tray { display: flex; margin-left: auto; }
.taskbar .tray button { width: 24px; }
.clock { display: flex; flex-direction: column; justify-content: center; align-items: center; width: 68px; line-height: 18px; }
.taskbar .notify { position: relative; width: 44px; margin-right: 4px; }
.notify span {
    position: absolute; left: 21px; top: 18px; width: 16px; height: 16px; border-radius: 8px;
    border: 1px solid #999; background: #2b2b2b; line-height: 14px; font-weight: bold;
}
.taskbar .desktop { width: 5px; border-left: 1px solid #555; }
```
